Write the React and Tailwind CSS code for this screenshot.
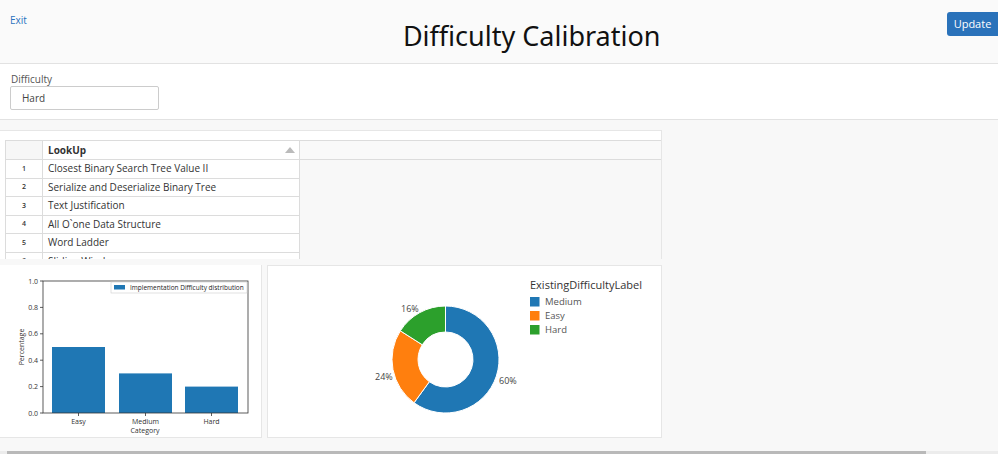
import React from "react";

const rows = [
  "Closest Binary Search Tree Value II",
  "Serialize and Deserialize Binary Tree",
  "Text Justification",
  "All O`one Data Structure",
  "Word Ladder",
  "Sliding Window",
];

function arc(cx, cy, r0, r1, a0, a1) {
  const p = (r, a) => {
    const t = ((a - 90) * Math.PI) / 180;
    return [cx + r * Math.cos(t), cy + r * Math.sin(t)];
  };
  const large = a1 - a0 > 180 ? 1 : 0;
  const [x0, y0] = p(r1, a0);
  const [x1, y1] = p(r1, a1);
  const [x2, y2] = p(r0, a1);
  const [x3, y3] = p(r0, a0);
  return `M${x0} ${y0} A${r1} ${r1} 0 ${large} 1 ${x1} ${y1} L${x2} ${y2} A${r0} ${r0} 0 ${large} 0 ${x3} ${y3} Z`;
}

function BarChart() {
  const left = 43, top = 16, right = 248, bottom = 148;
  const h = bottom - top;
  const bars = [
    { label: "Easy", x: 52, v: 0.5 },
    { label: "Medium", x: 119, v: 0.3 },
    { label: "Hard", x: 185, v: 0.2 },
  ];
  const ticks = [0, 0.2, 0.4, 0.6, 0.8, 1.0];
  return (
    <svg width="262" height="173" style={{ fontFamily: "'Open Sans', sans-serif" }}>
      {bars.map((b) => (
        <rect key={b.label} x={b.x} y={bottom - b.v * h} width="53" height={b.v * h} fill="#1f77b4" />
      ))}
      <rect x={left} y={top} width={right - left} height={h} fill="none" stroke="#333" strokeWidth="0.8" />
      {ticks.map((t) => (
        <g key={t}>
          <line x1={left - 3} x2={left} y1={bottom - t * h} y2={bottom - t * h} stroke="#333" strokeWidth="0.8" />
          <text x={left - 5} y={bottom - t * h + 2.5} fontSize="7" textAnchor="end" fill="#333">
            {t.toFixed(1)}
          </text>
        </g>
      ))}
      {bars.map((b) => (
        <g key={b.label + "t"}>
          <line x1={b.x + 26.5} x2={b.x + 26.5} y1={bottom} y2={bottom + 3} stroke="#333" strokeWidth="0.8" />
          <text x={b.x + 26.5} y={bottom + 11} fontSize="7" textAnchor="middle" fill="#333">
            {b.label}
          </text>
        </g>
      ))}
      <text x="145" y="168" fontSize="7" textAnchor="middle" fill="#333">Category</text>
      <text x="0" y="0" fontSize="7" textAnchor="middle" fill="#333" transform="translate(24 82) rotate(-90)">
        Percentage
      </text>
      <rect x="111" y="17" width="136" height="11" fill="#fff" stroke="#ccc" strokeWidth="0.6" />
      <rect x="114" y="20" width="11" height="4.5" fill="#1f77b4" />
      <text x="130" y="25" fontSize="6.5" fill="#222">Implementation Difficulty distribution</text>
    </svg>
  );
}

function Donut() {
  const cx = 177.5, cy = 93.5;
  const segs = [
    { c: "#1f77b4", a0: 0, a1: 216 },
    { c: "#ff7f0e", a0: 216, a1: 302.4 },
    { c: "#2ca02c", a0: 302.4, a1: 360 },
  ];
  return (
    <svg width="395" height="173" style={{ fontFamily: "'Open Sans', sans-serif" }}>
      {segs.map((s) => (
        <path key={s.c} d={arc(cx, cy, 27.5, 53.5, s.a0, s.a1)} fill={s.c} stroke="#fff" strokeWidth="1" />
      ))}
      <text x="133" y="46" fontSize="9" fill="#444">16%</text>
      <text x="107" y="114" fontSize="9" fill="#444">24%</text>
      <text x="231" y="118" fontSize="9" fill="#444">60%</text>
      <text x="262" y="23" fontSize="11" fill="#333">ExistingDifficultyLabel</text>
      {[
        ["#1f77b4", "Medium"],
        ["#ff7f0e", "Easy"],
        ["#2ca02c", "Hard"],
      ].map(([c, l], i) => (
        <g key={l}>
          <rect x="262" y={31 + i * 14} width="9.5" height="9.5" fill={c} />
          <text x="277" y={39 + i * 14} fontSize="9.5" fill="#555">{l}</text>
        </g>
      ))}
    </svg>
  );
}

export default function App() {
  return (
    <div className="h-[454px] w-[998px] overflow-hidden bg-[#f8f8f8] flex flex-col font-['Open_Sans',sans-serif] text-[#333]">
      <div className="h-[64px] shrink-0 bg-[#fafafa] border-b border-[#e2e2e2] flex items-start">
        <a className="text-[10px] text-[#2a73bf] ml-[10px] mt-[13px]">Exit</a>
        <h1 className="text-[27px] font-['Noto_Sans',sans-serif] text-[#111] mt-[19px] leading-[34px] ml-[376px]">Difficulty Calibration</h1>
        <button className="ml-auto mt-[12px] h-[24px] w-[51px] rounded-l-[3px] bg-[#2a72ba] text-white text-[11px]">
          Update
        </button>
      </div>

      <div className="h-[56px] shrink-0 bg-white border-b border-[#e2e2e2] px-[10px] pt-[8px]">
        <div className="text-[10px] text-[#555] leading-[14px] ml-[1px]">Difficulty</div>
        <div className="w-[149px] h-[24px] border border-[#ccc] rounded-[2px] flex items-center pl-[11px] text-[10px] text-[#444]">
          Hard
        </div>
      </div>

      <div className="mt-[10px] ml-0 w-[662px] h-[129px] shrink-0 bg-white border-t border-r border-[#e6e6e6] pt-[9px] pl-[5px] overflow-hidden">
        <div className="flex border-l border-t border-[#dcdcdc] h-full">
          <div className="w-[294px] shrink-0">
            <div className="flex h-[19px] border-b border-[#dcdcdc] bg-[#f7f7f7]">
              <div className="w-[37px] border-r border-[#dcdcdc]"></div>
              <div className="flex-1 flex items-center justify-between pl-[5px] pr-[4px] border-r border-[#dcdcdc] bg-white">
                <span className="text-[10px] font-bold text-[#333]">LookUp</span>
                <span className="w-0 h-0 border-l-[5px] border-r-[5px] border-b-[6px] border-l-transparent border-r-transparent border-b-[#bbb]"></span>
              </div>
            </div>
            {rows.map((r, i) => (
              <div key={r} className="flex h-[18.5px] border-b border-[#dcdcdc] bg-white">
                <div className="w-[37px] border-r border-[#dcdcdc] flex items-center justify-center text-[7px] font-semibold text-[#333]">
                  {i + 1}
                </div>
                <div className="flex-1 flex items-center pl-[5px] border-r border-[#dcdcdc] text-[10px] text-[#333]">{r}</div>
              </div>
            ))}
          </div>
          <div className="flex-1 flex flex-col">
            <div className="h-[19px] border-b border-[#dcdcdc] bg-[#f9f9f9]"></div>
            <div className="flex-1 bg-[#f8f8f8]"></div>
          </div>
        </div>
      </div>

      <div className="mt-[6px] flex gap-[5px] shrink-0">
        <div className="w-[262px] h-[173px] bg-white border-r border-b border-[#e6e6e6]">
          <BarChart />
        </div>
        <div className="w-[395px] h-[173px] bg-white border border-[#e6e6e6]">
          <Donut />
        </div>
      </div>

      <div className="mt-auto h-[3px] w-[998px] bg-[#ececec] flex">
        <div className="ml-[7px] w-[919px] bg-[#b9b9b9]"></div>
      </div>
    </div>
  );
}
